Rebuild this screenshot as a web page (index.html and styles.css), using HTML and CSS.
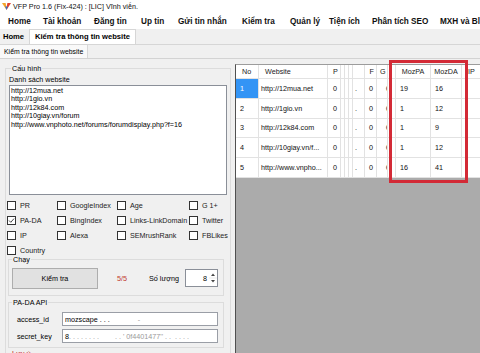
FILE: index.html
```html
<!DOCTYPE html>
<html>
<head>
<meta charset="utf-8">
<link rel="stylesheet" href="styles.css">
</head>
<body>
<div class="titlebar">
  <svg class="logo" viewBox="0 0 10 10"><polygon points="0,1 4,1 5,6 5,9" fill="#f4a52a"/><polygon points="10,1 6,1 5,6 5,9" fill="#e2412d"/><polygon points="3.5,5 6.5,5 5,9" fill="#2f6fd0"/></svg>
  <span>VFP Pro 1.6 (Fix-424) : [LIC] Vĩnh viễn.</span>
</div>
<nav class="menubar">
  <span>Home</span><span>Tài khoản</span><span>Đăng tin</span><span>Up tin</span><span>Gửi tin nhắn</span><span>Kiểm tra</span><span>Quản lý</span><span>Tiện ích</span><span>Phân tích SEO</span><span>MXH và Bl</span>
</nav>
<div class="tabstrip">
  <span class="tab">Home</span><span class="tab active">Kiểm tra thông tin website</span>
</div>
<div class="subtabs"><span class="subtab">Kiểm tra thông tin website</span></div>
<div class="content">
  <div class="left">
    <fieldset class="grp main">
      <legend>Cấu hình</legend>
      <div class="lbl">Danh sách website</div>
      <div class="textarea">http://12mua.net
http://1gio.vn
http://12k84.com
http://10giay.vn/forum
http://www.vnphoto.net/forums/forumdisplay.php?f=16</div>
      <div class="checks">
        <label class="cb"><span class="box"></span>PR</label>
        <label class="cb"><span class="box"></span>GoogleIndex</label>
        <label class="cb"><span class="box"></span>Age</label>
        <label class="cb"><span class="box"></span>G 1+</label>
        <label class="cb"><span class="box"><svg viewBox="0 0 7 7"><path d="M1 3.5 L2.8 5.3 L6 1.6" fill="none" stroke="#333" stroke-width="0.9"/></svg></span>PA-DA</label>
        <label class="cb"><span class="box"></span>BingIndex</label>
        <label class="cb"><span class="box"></span>Links-LinkDomain</label>
        <label class="cb"><span class="box"></span>Twitter</label>
        <label class="cb"><span class="box"></span>IP</label>
        <label class="cb"><span class="box"></span>Alexa</label>
        <label class="cb"><span class="box"></span>SEMrushRank</label>
        <label class="cb"><span class="box"></span>FBLikes</label>
        <label class="cb"><span class="box"></span>Country</label>
      </div>
      <fieldset class="grp run">
        <legend>Chạy</legend>
        <div class="runrow">
          <span class="btn">Kiểm tra</span>
          <span class="count">5/5</span>
          <span class="qty">Số lượng</span>
          <span class="spin"><span class="val">8</span><svg class="arrows" viewBox="0 0 8 16"><path d="M2 6 L4 3.5 L6 6 Z" fill="#444"/><path d="M2 10 L4 12.5 L6 10 Z" fill="#444"/><line x1="0" y1="8" x2="8" y2="8" stroke="#ddd" stroke-width="0.6"/></svg></span>
        </div>
      </fieldset>
      <fieldset class="grp api">
        <legend>PA-DA API</legend>
        <div class="field"><span class="flbl">access_id</span><span class="input">mozscape . . .<span class="blur">              -</span></span></div>
        <div class="field"><span class="flbl">secret_key</span><span class="input">8<span class="blur">. . . . . . . .        . . ' 0f4401477'' . .  . . . . </span></span></div>
      </fieldset>
      <div class="note">Lưu ý</div>
    </fieldset>
  </div>
  <div class="gridwrap">
    <div class="grid">
      <div class="c h no">No</div><div class="c h web">Website</div><div class="c h p">P</div><div class="c"></div><div class="c"></div><div class="c"></div><div class="c"></div><div class="c h f">F</div><div class="c h g">G</div><div class="c"></div><div class="c h ctr">MozPA</div><div class="c h ctr">MozDA</div><div class="c h ip">IP</div>

      <div class="c no sel">1</div><div class="c web">http://12mua.net</div><div class="c p">0</div><div class="c"></div><div class="c"></div><div class="c"></div><div class="c dot">.</div><div class="c fv">0</div><div class="c gv"><span>0</span></div><div class="c"></div><div class="c mv">19</div><div class="c mv">16</div><div class="c"></div>

      <div class="c no">2</div><div class="c web">http://1gio.vn</div><div class="c p">0</div><div class="c"></div><div class="c"></div><div class="c"></div><div class="c dot">.</div><div class="c fv">0</div><div class="c gv"><span>0</span></div><div class="c"></div><div class="c mv">1</div><div class="c mv">12</div><div class="c"></div>

      <div class="c no">3</div><div class="c web">http://12k84.com</div><div class="c p">0</div><div class="c"></div><div class="c"></div><div class="c"></div><div class="c dot">.</div><div class="c fv">0</div><div class="c gv"><span>0</span></div><div class="c"></div><div class="c mv">1</div><div class="c mv">9</div><div class="c"></div>

      <div class="c no">4</div><div class="c web">http://10giay.vn/f...</div><div class="c p">0</div><div class="c"></div><div class="c"></div><div class="c"></div><div class="c dot">.</div><div class="c fv">0</div><div class="c gv"><span>0</span></div><div class="c"></div><div class="c mv">1</div><div class="c mv">12</div><div class="c"></div>

      <div class="c no">5</div><div class="c web">http://www.vnpho...</div><div class="c p">0</div><div class="c"></div><div class="c"></div><div class="c"></div><div class="c dot">.</div><div class="c fv">0</div><div class="c gv"><span>0</span></div><div class="c"></div><div class="c mv">16</div><div class="c mv">41</div><div class="c"></div>
    </div>
    <div class="redbox"></div>
  </div>
</div>
</body>
</html>
```
FILE: styles.css
```css
* { box-sizing: border-box; }
html, body { margin: 0; padding: 0; }
body {
  width: 480px;
  height: 353px;
  overflow: hidden;
  font-family: "Liberation Sans", Arial, sans-serif;
  font-size: 7.2px;
  color: #000;
  background: #f0f0f0;
}

.titlebar {
  height: 13px;
  background: #fff;
  display: flex;
  align-items: center;
  padding-left: 2px;
  color: #111;
}
.logo { width: 9px; height: 9px; margin-right: 2px; }

.menubar {
  height: 16px;
  background: #fff;
  display: grid;
  grid-template-columns: 35px 51px 47px 37px 64px 48px 39px 43px 68px 40px;
  align-items: center;
  padding-left: 8px;
  font-weight: bold;
  font-size: 8.2px;
  white-space: nowrap;
  overflow: hidden;
  color: #111;
}

.tabstrip {
  height: 16px;
  display: flex;
  align-items: stretch;
  background: #f0f0f0;
  border-bottom: 1px solid #d6d6d6;
}
.tab {
  font-weight: bold;
  font-size: 7.6px;
  line-height: 15px;
  padding: 0 3px;
  width: 28px;
  white-space: nowrap;
}
.tab.active {
  width: 107px;
  margin-left: 1px;
  padding: 0 5px;
  background: #fff;
  border: 1px solid #d6d6d6;
  border-bottom: none;
  line-height: 14px;
}

.subtabs {
  height: 14px;
  display: flex;
  background: #f0f0f0;
  border-bottom: 1px solid #d3d3d3;
}
.subtab {
  padding: 0 4px 0 4px;
  font-size: 6.9px;
  line-height: 13px;
  white-space: nowrap;
  background: #f9f9f9;
  border-right: 1px solid #d8d8d8;
}

.content {
  display: flex;
  height: 294px;
  overflow: hidden;
}
.left {
  width: 235px;
  flex: none;
  padding-left: 5px;
  overflow: hidden;
}

.grp {
  margin: 0;
  min-width: 0;
  border: 1px solid #dcdcdc;
}
.grp legend {
  padding: 0 1px;
  line-height: 9px;
  font-size: 7.2px;
}

.main {
  margin-top: 5px;
  width: 226px;
  height: 300px;
  padding: 0 3px;
}
.main > legend { margin-left: 2px; }

.lbl {
  margin-top: 1.5px;
  line-height: 9px;
}
.textarea {
  margin-top: 1px;
  width: 218px;
  height: 110px;
  background: #fff;
  border: 1px solid #8a8f98;
  padding: 1px 1px;
  line-height: 8.5px;
  white-space: pre;
  overflow: hidden;
}

.checks {
  margin-top: 3px;
  margin-left: -2px;
  display: grid;
  grid-template-columns: 50px 60px 72px auto;
  grid-template-rows: 15px 15px 15px 12px;
  align-items: start;
}
.cb {
  display: flex;
  align-items: center;
  height: 15px;
  white-space: nowrap;
  color: #222;
}
.box {
  width: 9px;
  height: 9px;
  flex: none;
  margin-right: 4px;
  border: 1px solid #333;
  background: #fff;
  display: flex;
}
.box svg { width: 7px; height: 7px; }

.run {
  margin-left: -1px;
  width: 216px;
  padding: 4px 3px 6px;
}
.runrow {
  display: flex;
  align-items: center;
  height: 21px;
}
.btn {
  width: 86px;
  height: 21px;
  background: #e1e1e1;
  border: 1px solid #adadad;
  display: flex;
  align-items: center;
  justify-content: center;
}
.count {
  margin-left: 19px;
  color: #c0392b;
}
.qty { margin-left: 22px; }
.spin {
  margin-left: 6px;
  width: 33px;
  height: 18px;
  background: #fff;
  border: 1px solid #8a8f98;
  display: flex;
  align-items: center;
  justify-content: flex-end;
}
.spin .val { margin-right: 2px; }
.arrows { width: 8px; height: 16px; }

.api {
  margin-top: 2px;
  margin-left: -1px;
  width: 216px;
  padding: 5.5px 5px 4px 8px;
}
.api legend { margin-left: -5px; }
.field {
  display: flex;
  align-items: center;
  height: 14px;
}
.field + .field { margin-top: 3px; }
.flbl { width: 45px; }
.input {
  width: 156px;
  height: 14px;
  background: #fff;
  border: 1px solid #9a9ea6;
  padding-left: 2px;
  display: flex;
  align-items: center;
  white-space: pre;
  overflow: hidden;
}
.blur { color: #9a9a9a; }
.note {
  margin-top: 1px;
  margin-left: 3px;
  line-height: 9px;
  color: #c62828;
}

.gridwrap {
  flex: 1;
  margin-top: 5px;
  position: relative;
  border-left: 1px solid #505050;
  border-top: 1px solid #9c9c9c;
  background: #ababab;
}
.grid {
  display: grid;
  width: max-content;
  grid-template-columns: 23px 69px 13px 4px 4px 4px 12px 12px 11px 8px 35px 31px 30px;
  grid-template-rows: 14px repeat(5, 19.75px);
}
.c {
  background: #fff;
  border-right: 1px solid #e2e2e2;
  border-bottom: 1px solid #e2e2e2;
  display: flex;
  align-items: center;
  white-space: nowrap;
  overflow: hidden;
  color: #111;
}
.h { color: #222; }
.h.no { padding-left: 6px; }
.h.web { padding-left: 6px; }
.no { padding-left: 4px; }
.web { padding-left: 2px; }
.p { padding-left: 5px; }
.dot { padding-left: 2px; }
.h.f { justify-content: flex-end; padding-right: 2px; }
.h.g { padding-left: 3px; }
.fv { padding-left: 4px; }
.gv { justify-content: flex-end; }
.gv span { margin-right: -3px; }
.ctr { justify-content: center; }
.mv { padding-left: 4px; }
.ip { padding-left: 6px; }
.sel { background: #3394f5; color: #fff; }

.redbox {
  position: absolute;
  left: 153px;
  top: -5px;
  width: 79px;
  height: 123px;
  border: 3px solid #d32a36;
}
```
